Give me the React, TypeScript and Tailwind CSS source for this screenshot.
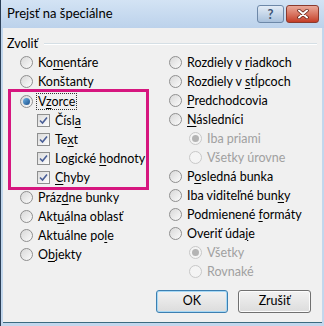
import React from "react";

type Item = {
  pre: string;
  key?: string;
  post?: string;
  kind: "radio" | "check";
  checked?: boolean;
  disabled?: boolean;
  indent?: boolean;
  focus?: boolean;
};

function Radio({ checked, disabled }: { checked?: boolean; disabled?: boolean }) {
  return (
    <span
      className={`flex h-[13px] w-[13px] shrink-0 items-center justify-center rounded-full border ${
        disabled ? "border-[#c8c8c8] bg-[#f4f4f4]" : "border-[#8f8f8f] bg-gradient-to-br from-[#d8d8d8] to-[#fbfbfb]"
      }`}
    >
      {checked && (
        <span
          className={`h-[7px] w-[7px] rounded-full ${
            disabled ? "bg-[#b4b4b4]" : "bg-gradient-to-br from-[#6fb5e8] to-[#1a4f8a]"
          }`}
        />
      )}
    </span>
  );
}

function Check() {
  return (
    <span className="flex h-[13px] w-[13px] shrink-0 items-center justify-center border border-[#8e8f8f] bg-gradient-to-br from-[#dcdcdc] to-[#fdfdfd]">
      <svg width="9" height="9" viewBox="0 0 9 9">
        <path d="M1 4.5 L3.5 7 L8 1.5" fill="none" stroke="#4a5f97" strokeWidth="1.6" />
      </svg>
    </span>
  );
}

function Row({ it }: { it: Item }) {
  const text = (
    <span className={it.disabled ? "text-[#a0a0a0]" : "text-[#000]"}>
      {it.pre}
      {it.key && <span className="underline underline-offset-2">{it.key}</span>}
      {it.post}
    </span>
  );
  const indent = it.indent ? (it.kind === "check" ? "pl-[17px]" : "pl-[20px]") : "";
  return (
    <div className={`flex h-[19px] items-center whitespace-nowrap ${indent}`}>
      {it.kind === "radio" ? <Radio checked={it.checked} disabled={it.disabled} /> : <Check />}
      <span className={`ml-[4px] px-[1px] leading-[15px] ${it.focus ? "outline outline-1 outline-dotted outline-[#333]" : ""}`}>
        {text}
      </span>
    </div>
  );
}

const left: Item[] = [
  { pre: "Ko", key: "m", post: "entáre", kind: "radio" },
  { pre: "Konštanty", kind: "radio" },
  { pre: "V", key: "z", post: "orce", kind: "radio", checked: true, focus: true },
];
const checks: Item[] = [
  { pre: "Čísl", key: "a", kind: "check", indent: true },
  { pre: "Te", key: "x", post: "t", kind: "check", indent: true },
  { pre: "Logické ", key: "h", post: "odnoty", kind: "check", indent: true },
  { pre: "", key: "C", post: "hyby", kind: "check", indent: true },
];
const leftRest: Item[] = [
  { pre: "Práz", key: "d", post: "ne bunky", kind: "radio" },
  { pre: "Akt", key: "u", post: "álna oblasť", kind: "radio" },
  { pre: "Aktuálne po", key: "l", post: "e", kind: "radio" },
  { pre: "O", key: "b", post: "jekty", kind: "radio" },
];
const right: Item[] = [
  { pre: "Rozdiely v ", key: "r", post: "iadkoch", kind: "radio" },
  { pre: "Rozdiely v ", key: "s", post: "tĺpcoch", kind: "radio" },
  { pre: "", key: "P", post: "redchodcovia", kind: "radio" },
  { pre: "", key: "N", post: "ásledníci", kind: "radio" },
  { pre: "Iba priami", kind: "radio", checked: true, disabled: true, indent: true },
  { pre: "Všetky úrovne", kind: "radio", disabled: true, indent: true },
  { pre: "P", key: "o", post: "sledná bunka", kind: "radio" },
  { pre: "Iba viditeľné bun", key: "k", post: "y", kind: "radio" },
  { pre: "Podmienené ", key: "f", post: "ormáty", kind: "radio" },
  { pre: "Overiť úda", key: "j", post: "e", kind: "radio" },
  { pre: "Všetky", kind: "radio", checked: true, disabled: true, indent: true },
  { pre: "Rovnaké", kind: "radio", disabled: true, indent: true },
];

export default function App() {
  return (
    <div
      className="flex h-[326px] w-[324px] flex-col overflow-hidden border-l border-[#2c4058] bg-[#c2d7ed] text-[12.5px]"
      style={{ fontFamily: '"Segoe UI", Lato, sans-serif' }}
    >
      {/* Title bar */}
      <div className="flex h-[28px] shrink-0 items-center justify-between bg-gradient-to-b from-[#d3e3f4] to-[#bcd2eb] pl-[6px] pr-[5px]">
        <span className="text-[13px] text-[#000]">Prejsť na špeciálne</span>
        <div className="flex items-center gap-[2px] self-start pt-[5px]">
          <div className="flex h-[18px] w-[27px] items-center justify-center rounded-[3px] border border-[#6d88a8] bg-gradient-to-b from-[#e3ecf6] to-[#a9c1dc] text-[13px] font-bold leading-none text-[#3e5574]">
            ?
          </div>
          <div className="flex h-[18px] w-[33px] items-center justify-center rounded-[3px] border border-[#8a3a2e] bg-gradient-to-b from-[#e9a99a] to-[#c43c26]">
            <svg width="12" height="10" viewBox="0 0 12 10">
              <path d="M2 1.5 L10 8.5 M10 1.5 L2 8.5" stroke="#5a1a10" strokeWidth="3.4" strokeLinecap="round" />
              <path d="M2 1.5 L10 8.5 M10 1.5 L2 8.5" stroke="#fff" strokeWidth="2" strokeLinecap="round" />
            </svg>
          </div>
        </div>
      </div>

      {/* Client */}
      <div className="mx-[2px] mb-[3px] flex flex-1 flex-col border-b border-[#3a6a80] bg-[#f0f0f0] pl-[4px] pr-[5px]">
        <div className="mt-[7px] flex items-center">
          <span className="text-[#000]">Zvoliť</span>
          <div className="ml-[6px] h-[2px] flex-1 border-t border-b border-t-[#d5dfe5] border-b-[#ffffff]" />
        </div>

        <div className="mt-[-1px] flex">
          <div className="w-[150px]">
            <div className="pl-[13px]">
              {left.slice(0, 2).map((it, i) => (
                <Row key={i} it={it} />
              ))}
            </div>
            <div className="ml-[1px] mt-[-2px] w-[141px] border-[3px] border-[#d6167f] pl-[9px]">
              {left.slice(2).map((it, i) => (
                <Row key={i} it={it} />
              ))}
              {checks.map((it, i) => (
                <Row key={i} it={it} />
              ))}
            </div>
            <div className="mt-[-2px] pl-[13px]">
              {leftRest.map((it, i) => (
                <Row key={i} it={it} />
              ))}
            </div>
          </div>
          <div className="flex-1 pl-[12px]">
            {right.map((it, i) => (
              <Row key={i} it={it} />
            ))}
          </div>
        </div>

        <div className="mt-auto mb-[9px] flex justify-end gap-[10px] pr-[6px]">
          <button className="h-[23px] w-[72px] rounded-[3px] border border-[#3c7fb1] bg-gradient-to-b from-[#f2f2f2] to-[#dcdcdc] text-[12.5px] text-[#000] shadow-[inset_0_0_0_1px_#a6d8f5]">
            OK
          </button>
          <button className="h-[23px] w-[73px] rounded-[3px] border border-[#707070] bg-gradient-to-b from-[#f2f2f2] to-[#dcdcdc] text-[12.5px] text-[#000] shadow-[inset_0_0_0_1px_#fcfcfc]">
            Zrušiť
          </button>
        </div>
      </div>
    </div>
  );
}
